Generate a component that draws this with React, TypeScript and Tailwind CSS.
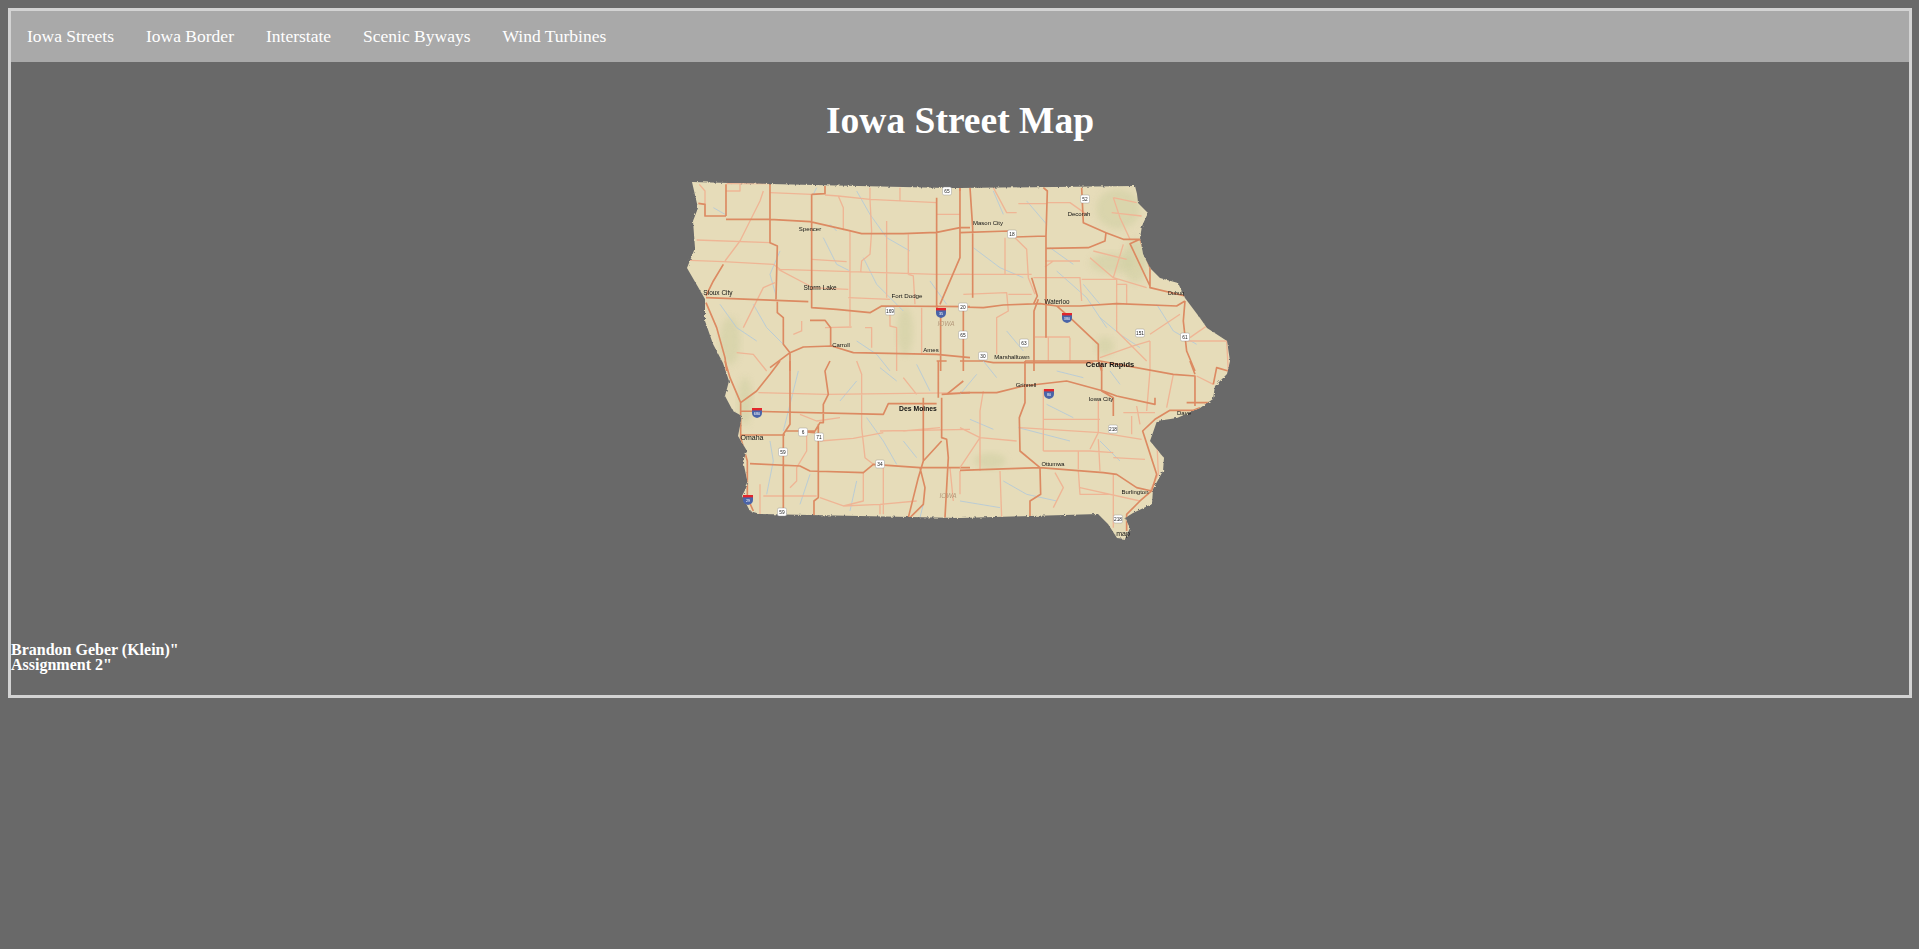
const navItems = ["Iowa Streets", "Iowa Border", "Interstate", "Scenic Byways", "Wind Turbines"]

const outline =
  "692,181 770,183 947,187 960,187 1135,185 1137,193 1138,202 1148,212 1142,225 1140,237 1143,253 1150,267 1160,277 1178,282 1185,297 1200,317 1207,327 1227,340 1230,360 1227,373 1215,385 1213,398 1200,407 1177,417 1157,420 1150,440 1164,457 1163,470 1153,488 1152,503 1133,512 1125,517 1130,527 1125,538 1117,537 1108,523 1098,513 960,517 760,513 750,510 742,495 748,483 743,460 747,450 738,435 742,415 733,410 725,395 729,380 723,362 713,343 705,320 705,298 687,267 695,247 693,220 698,207"

// Each quadrant is traced in its own local coordinates (3x), then scaled down
const quadrants = [
  {
    x: 670,
    y: 170,
    major:
      "M168 40V135M85 97L105 100V135H168M168 145L300 145L420 152L535 178L575 188L700 188L800 184L870 170L900 170M300 40V215L322 225L318 385M425 70V410L500 415L600 425L635 405L900 407M108 380L415 392M160 280L130 330L108 375M108 395L140 470L165 560L170 600M322 392V425L340 440V520L360 545V600M300 590L360 545L400 528L485 525L550 545L800 550L900 560M420 448H465L482 470V525M800 80V410L812 420V600M870 50V260L810 400M425 70L465 68V45",
    minor:
      "M88 40L105 60V100M210 40V60H168M170 38H300M300 65L425 70M465 72L505 75L600 85L800 95M600 50V85L605 180L600 250L575 270L572 305M690 50V90M505 75L520 110V178M540 178V465M650 150V380M715 190V310L730 315L735 400M80 207L300 215M60 268L160 272L310 280L330 295L800 310L900 310M425 265L530 272M325 295L420 345M420 350L535 355M535 380L660 385M660 430V465L680 470V600M165 270L210 210L270 90L280 60M220 470L280 350L315 335M370 490L395 480V450M200 545L250 550L290 600M585 470H605V530M755 410V550M870 130H800M465 470L545 468",
    water:
      "M165 130L130 110M430 70L440 50M480 160L500 180M560 60L600 130L650 200L720 240M460 200L500 280L540 300M580 260L620 340L700 420M330 240L300 310L320 380M150 400L200 470L260 510M250 400L290 470L340 520M560 510L620 550L660 600M830 400L780 330",
  },
  {
    x: 960,
    y: 170,
    major:
      "M0 50V60M30 50L38 170V380M0 185L145 180L165 198L258 195L262 60L250 50M258 195V500M258 232L385 230L435 210L438 185L370 155L365 50M438 185L490 205L540 205L570 290V350L675 375M540 205L510 218L570 345M0 408L70 410L130 402L240 398L290 405L360 405L470 398L650 405L675 390M220 400L232 375L215 320M235 385L222 420V600M290 405L330 440L415 520V570L425 600M0 570H70L100 575H400M0 400L10 420V600M675 390L670 450L680 540L705 600",
    minor:
      "M100 50L140 125H170M175 98H260M262 95H330L380 130M135 200V310M165 200L200 235L205 320L225 370M10 370L140 365L145 420L110 440V550M145 370H215M0 310H215M220 320H360L365 390M365 325H470L470 400M255 270H360M255 288L280 270M500 340V400M470 340H500M265 500V570M330 500V570M225 498H330M470 400V480L510 520L560 570M570 510V600M420 560L520 525L570 510M570 490L660 430M460 80L480 140L510 205M460 80L530 95M455 125L545 135M490 220L460 320M400 240L500 265M390 260L460 320L560 350M690 500L740 465M680 510L800 510L805 600",
    water:
      "M100 60L130 130M200 90L260 160M40 230L120 290L190 320M270 230L340 280M290 300L380 380L440 470M420 440L480 490L540 530M140 480L190 540M370 340L420 400M590 400L640 480L710 520",
  },
  {
    x: 670,
    y: 360,
    major:
      "M165 0L180 50L212 125V230L232 300V410L250 450M212 125L260 90L300 40L330 0M212 150L640 160L655 128H800M360 0V190L340 220V470M345 210H435L450 185H460V130L475 100L465 30L480 0M210 222H345M435 215L400 212M445 190V410L432 420V470M240 308L390 315L420 330L580 335L610 310L750 320H900M800 0H830M805 0V110M760 110V300L745 350L715 470M815 110V230L830 235L835 290L825 470M760 300L815 240M750 320L765 380L760 430L720 470M830 100L880 60M815 100L900 95",
    minor:
      "M265 95L470 100L900 95M560 0L575 40V200L585 290L610 310M630 210L900 205M450 240L550 232L640 215M700 210L810 200M390 160L440 180L510 170M410 220V270L380 320V360L360 380M640 320V460M580 335V420L520 435M450 410L520 435L630 430L740 420M280 405H440M270 370V460M630 430V460M700 50L740 100M840 320L850 420M870 330V400",
    water:
      "M385 30L340 210M300 240L310 300L290 400M590 170L640 240L680 310M630 20L680 60M740 10L780 90M420 340L390 430M560 360L540 450M700 240L740 290M510 120L560 60M760 430L750 470",
  },
  {
    x: 960,
    y: 360,
    major:
      "M195 0V125L178 170L180 270L240 320L242 400L210 420V470M0 95L110 95L190 75L320 60L430 90L470 105L585 130V110M0 328L240 320L430 335L470 340L530 380L575 390L590 340L548 210L585 175L630 148H700L720 140M425 0V90L460 110V165M195 0H420L640 40L705 45V135M690 0L705 40M575 390L540 420L500 460V510M760 70L770 20L805 30M680 125H760",
    minor:
      "M70 90L60 150V330M250 85V270M250 175H420M180 200L420 215L545 235M415 120V215L390 265M415 235L420 330M250 270H390L460 275M355 270V325M460 290L555 295M490 155H585M530 135L540 190M515 165V220M570 30L560 150M640 40L620 140M0 200L60 230L170 240M60 230L0 320M120 330L125 470M355 330L360 400L450 400M460 340V500M360 380L540 420M285 335L310 380L280 440M590 220L595 340L570 390M710 45L760 70",
    water:
      "M290 30L370 50M30 175L100 205M0 100L50 40M175 200L330 240M260 130L340 170M420 240L480 300M130 360L200 400L290 420M0 420L120 440M70 0L110 50M450 30L480 70",
  },
]

// Darker hilly patches along the rivers
const patches = [
  { x: 1118, y: 208, rx: 22, ry: 20 },
  { x: 1135, y: 260, rx: 12, ry: 22 },
  { x: 1112, y: 262, rx: 22, ry: 10 },
  { x: 730, y: 340, rx: 10, ry: 24 },
  { x: 745, y: 400, rx: 7, ry: 24 },
  { x: 1105, y: 345, rx: 9, ry: 9 },
  { x: 905, y: 330, rx: 8, ry: 24 },
  { x: 990, y: 460, rx: 16, ry: 8 },
]

const labels = [
  { x: 810, y: 230, t: "Spencer", s: 6, w: 400 },
  { x: 718, y: 294, t: "Sioux City", s: 6.5, w: 400 },
  { x: 820, y: 289, t: "Storm Lake", s: 6.5, w: 400 },
  { x: 907, y: 297, t: "Fort Dodge", s: 6.2, w: 400 },
  { x: 841, y: 346, t: "Carroll", s: 6, w: 400 },
  { x: 931, y: 351, t: "Ames", s: 6, w: 400 },
  { x: 988, y: 224, t: "Mason City", s: 6, w: 400 },
  { x: 1079, y: 215, t: "Decorah", s: 6, w: 400 },
  { x: 1057, y: 303, t: "Waterloo", s: 6.3, w: 400 },
  { x: 1176, y: 294, t: "Dubuq", s: 5.5, w: 400 },
  { x: 1012, y: 358, t: "Marshalltown", s: 6, w: 400 },
  { x: 1110, y: 366, t: "Cedar Rapids", s: 7.5, w: 700 },
  { x: 1026, y: 386, t: "Grinnell", s: 6, w: 400 },
  { x: 1101, y: 400, t: "Iowa City", s: 6, w: 400 },
  { x: 918, y: 410, t: "Des Moines", s: 6.8, w: 700 },
  { x: 752, y: 439, t: "Omaha", s: 7, w: 400 },
  { x: 1184, y: 414, t: "Dave", s: 6, w: 400 },
  { x: 1053, y: 465, t: "Ottumwa", s: 5.8, w: 400 },
  { x: 1135, y: 493, t: "Burlington", s: 6, w: 400 },
  { x: 1123, y: 535, t: "map", s: 7, w: 400 },
]

const shields = [
  { x: 947, y: 190, t: "65" },
  { x: 1085, y: 198, t: "52" },
  { x: 890, y: 310, t: "169" },
  { x: 963, y: 306, t: "20" },
  { x: 963, y: 334, t: "65" },
  { x: 1012, y: 233, t: "18" },
  { x: 1024, y: 342, t: "63" },
  { x: 983, y: 355, t: "30" },
  { x: 1140, y: 332, t: "151" },
  { x: 1185, y: 336, t: "61" },
  { x: 1113, y: 428, t: "218" },
  { x: 1118, y: 518, t: "218" },
  { x: 803, y: 431, t: "6" },
  { x: 819, y: 436, t: "71" },
  { x: 783, y: 451, t: "59" },
  { x: 880, y: 463, t: "34" },
  { x: 782, y: 511, t: "59" },
]

const interstates = [
  { x: 941, y: 310, t: "35" },
  { x: 1067, y: 315, t: "380" },
  { x: 1049, y: 391, t: "80" },
  { x: 757, y: 410, t: "680" },
  { x: 748, y: 497, t: "29" },
]

function IowaMap() {
  return (
    <svg className="block mx-auto" width="560" height="370" viewBox="680 175 560 370">
      <defs>
        <filter id="rough" x="-5%" y="-5%" width="110%" height="110%">
          <feTurbulence type="fractalNoise" baseFrequency="0.35" numOctaves="2" seed="4" />
          <feDisplacementMap in="SourceGraphic" scale="3" />
        </filter>
        <filter id="soft" x="-20%" y="-20%" width="140%" height="140%">
          <feGaussianBlur stdDeviation="3" />
        </filter>
        <filter id="raster" x="0" y="0" width="100%" height="100%">
          <feGaussianBlur stdDeviation="0.3" />
        </filter>
        <clipPath id="land">
          <polygon points={outline} />
        </clipPath>
      </defs>
      <polygon points={outline} fill="#e6dcb9" filter="url(#rough)" />
      <g clipPath="url(#land)">
        {patches.map((p) => (
          <ellipse key={p.x + "-" + p.y} cx={p.x} cy={p.y} rx={p.rx} ry={p.ry} fill="#cfcfa2" opacity="0.55" filter="url(#soft)" />
        ))}
      </g>
      <g clipPath="url(#land)" fill="none" strokeLinejoin="round" filter="url(#raster)">
        {quadrants.map((q) => (
          <g key={q.x + "-" + q.y} transform={`translate(${q.x} ${q.y}) scale(0.3333)`}>
            <path d={q.water} stroke="#afc8dc" strokeWidth="2.4" />
            <path d={q.minor} stroke="#efb595" strokeWidth="4" />
            <path d={q.major} stroke="#dc8a62" strokeWidth="5" />
          </g>
        ))}
      </g>
      <g fontFamily="'Liberation Sans', sans-serif" textAnchor="middle">
        <text x="946" y="325" fontSize="6.5" fontStyle="italic" fill="#b59a7c">IOWA</text>
        <text x="948" y="497" fontSize="6.5" fontStyle="italic" fill="#b59a7c">IOWA</text>
        {labels.map((l) => (
          <text key={l.t} x={l.x} y={l.y} fontSize={l.s} fontWeight={l.w} fill="#111">
            {l.t}
          </text>
        ))}
        {shields.map((s) => (
          <g key={s.t + s.x}>
            <rect x={s.x - 4.5} y={s.y - 4} width="9" height="8" rx="1.5" fill="#fff" stroke="#888" strokeWidth="0.4" />
            <text x={s.x} y={s.y + 1.8} fontSize="4.8" fill="#222">{s.t}</text>
          </g>
        ))}
        {interstates.map((s) => (
          <g key={s.t}>
            <path d={`M${s.x - 5} ${s.y - 1}h10v3q0 4-5 5q-5-1-5-5z`} fill="#4a64a8" />
            <rect x={s.x - 5} y={s.y - 3} width="10" height="2.4" fill="#e2262c" />
            <text x={s.x} y={s.y + 4} fontSize="3.8" fill="#fff">{s.t}</text>
          </g>
        ))}
      </g>
    </svg>
  )
}

export default function App() {
  return (
    <div className="min-h-screen bg-[#696969] pt-2 pb-px font-['Liberation_Serif',serif] text-white">
      <div className="ml-2 mr-[7px] border-[3px] border-[#d3d3d3]">
        <nav className="flex h-[51px] items-center gap-[32px] bg-[#a9a9a9] pl-[16px] text-[17.5px]">
          {navItems.map((item) => (
            <a key={item} href="#" className="whitespace-nowrap">
              {item}
            </a>
          ))}
        </nav>
        <h1 className="pt-[40px] pb-[37px] text-center text-[37.5px] leading-[37px] font-bold">Iowa Street Map</h1>
        <IowaMap />
        <div className="pt-[96px] pb-[23px] text-[16px] leading-[15px] font-bold">
          <p>Brandon Geber (Klein)"</p>
          <p>Assignment 2"</p>
        </div>
      </div>
    </div>
  )
}
